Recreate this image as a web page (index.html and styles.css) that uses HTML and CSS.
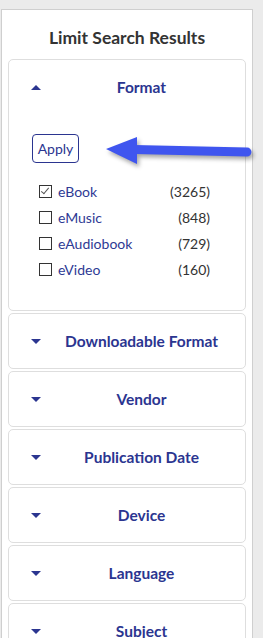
FILE: index.html
```html
<!DOCTYPE html>
<html lang="en">
<head>
    <meta charset="UTF-8">
    <meta name="viewport" content="width=device-width, initial-scale=1.0">
    <title>Limit Search Results</title>
    <link rel="stylesheet" href="styles.css">
</head>
<body>

<div class="panel">
    <h2 class="panel-title">Limit Search Results</h2>

    <div class="facet open">
        <div class="facet-head">
            <span class="caret up"></span>
            <span class="facet-name">Format</span>
        </div>
        <div class="facet-body">
            <button class="apply">Apply</button>
            <ul class="options">
                <li><span class="box checked"></span><span class="opt-name">eBook</span><span class="count">(3265)</span></li>
                <li><span class="box"></span><span class="opt-name">eMusic</span><span class="count">(848)</span></li>
                <li><span class="box"></span><span class="opt-name">eAudiobook</span><span class="count">(729)</span></li>
                <li><span class="box"></span><span class="opt-name">eVideo</span><span class="count">(160)</span></li>
            </ul>
        </div>

        <!-- pointer arrow drawn over the card -->
        <svg class="pointer" width="150" height="40" viewBox="0 0 150 40">
            <line x1="30" y1="16.5" x2="143" y2="19" stroke="#3f55ef" stroke-width="9" stroke-linecap="round"/>
            <polygon points="2,16 33,4 33,31" fill="#3f55ef"/>
        </svg>
    </div>

    <div class="facet">
        <div class="facet-head"><span class="caret"></span><span class="facet-name">Downloadable Format</span></div>
    </div>
    <div class="facet">
        <div class="facet-head"><span class="caret"></span><span class="facet-name">Vendor</span></div>
    </div>
    <div class="facet">
        <div class="facet-head"><span class="caret"></span><span class="facet-name">Publication Date</span></div>
    </div>
    <div class="facet">
        <div class="facet-head"><span class="caret"></span><span class="facet-name">Device</span></div>
    </div>
    <div class="facet">
        <div class="facet-head"><span class="caret"></span><span class="facet-name">Language</span></div>
    </div>
    <div class="facet">
        <div class="facet-head"><span class="caret"></span><span class="facet-name">Subject</span></div>
    </div>
</div>

</body>
</html>
```

FILE: styles.css
```css
body {
    margin: 0;
    background-color: #ebebeb;
    font-family: Lato, "Open Sans", sans-serif;
    color: #333;
}

.panel {
    width: 252px;
    box-sizing: border-box;
    margin: 9px 0 0 1px;
    padding: 0 6px 20px;
    background: white;
    border: 1px solid #cfcfcf;
}

.panel-title {
    margin: 0;
    padding: 17px 0 10px;
    font-size: 17.5px;
    line-height: 22px;
    font-weight: bold;
    text-align: center;
    color: #333;
}

.facet {
    position: relative;
    border: 1px solid #dedede;
    border-radius: 5px;
    margin-bottom: 2px;
}

.facet-head {
    display: flex;
    align-items: center;
    height: 54px;
    padding-left: 22px;
}

.caret {
    width: 0;
    height: 0;
    border-left: 5.5px solid transparent;
    border-right: 5.5px solid transparent;
    border-top: 5px solid #2b3590;
}

.caret.up {
    border-top: none;
    border-bottom: 5px solid #2b3590;
}

.facet-name {
    flex: 1;
    padding-right: 3px;
    text-align: center;
    font-size: 15.5px;
    font-weight: bold;
    color: #2b3590;
}

.facet-body {
    padding: 20px 0 28px 23px;
}

.apply {
    display: block;
    height: 29px;
    width: 47px;
    padding: 0;
    background: white;
    border: 1px solid #2b3590;
    border-radius: 4px;
    color: #2b3590;
    font-family: inherit;
    font-size: 14px;
}

.options {
    list-style: none;
    margin: 15px 0 0 7px;
    padding: 0;
    width: 171px;
}

.options li {
    display: flex;
    align-items: center;
    height: 26px;
    font-size: 14px;
}

.box {
    position: relative;
    width: 11px;
    height: 11px;
    border: 1px solid #333;
    background: white;
    margin-right: 6px;
}

.box.checked::after {
    content: "";
    position: absolute;
    left: 3px;
    top: 0;
    width: 3px;
    height: 7px;
    border-right: 1.5px solid #555;
    border-bottom: 1.5px solid #555;
    transform: rotate(40deg);
}

.opt-name {
    flex: 1;
    color: #2e3a94;
}

.count {
    color: #333;
}

.pointer {
    position: absolute;
    left: 95px;
    top: 73px;
    filter: drop-shadow(2px 3px 2px rgba(0, 0, 0, 0.35));
}
```
